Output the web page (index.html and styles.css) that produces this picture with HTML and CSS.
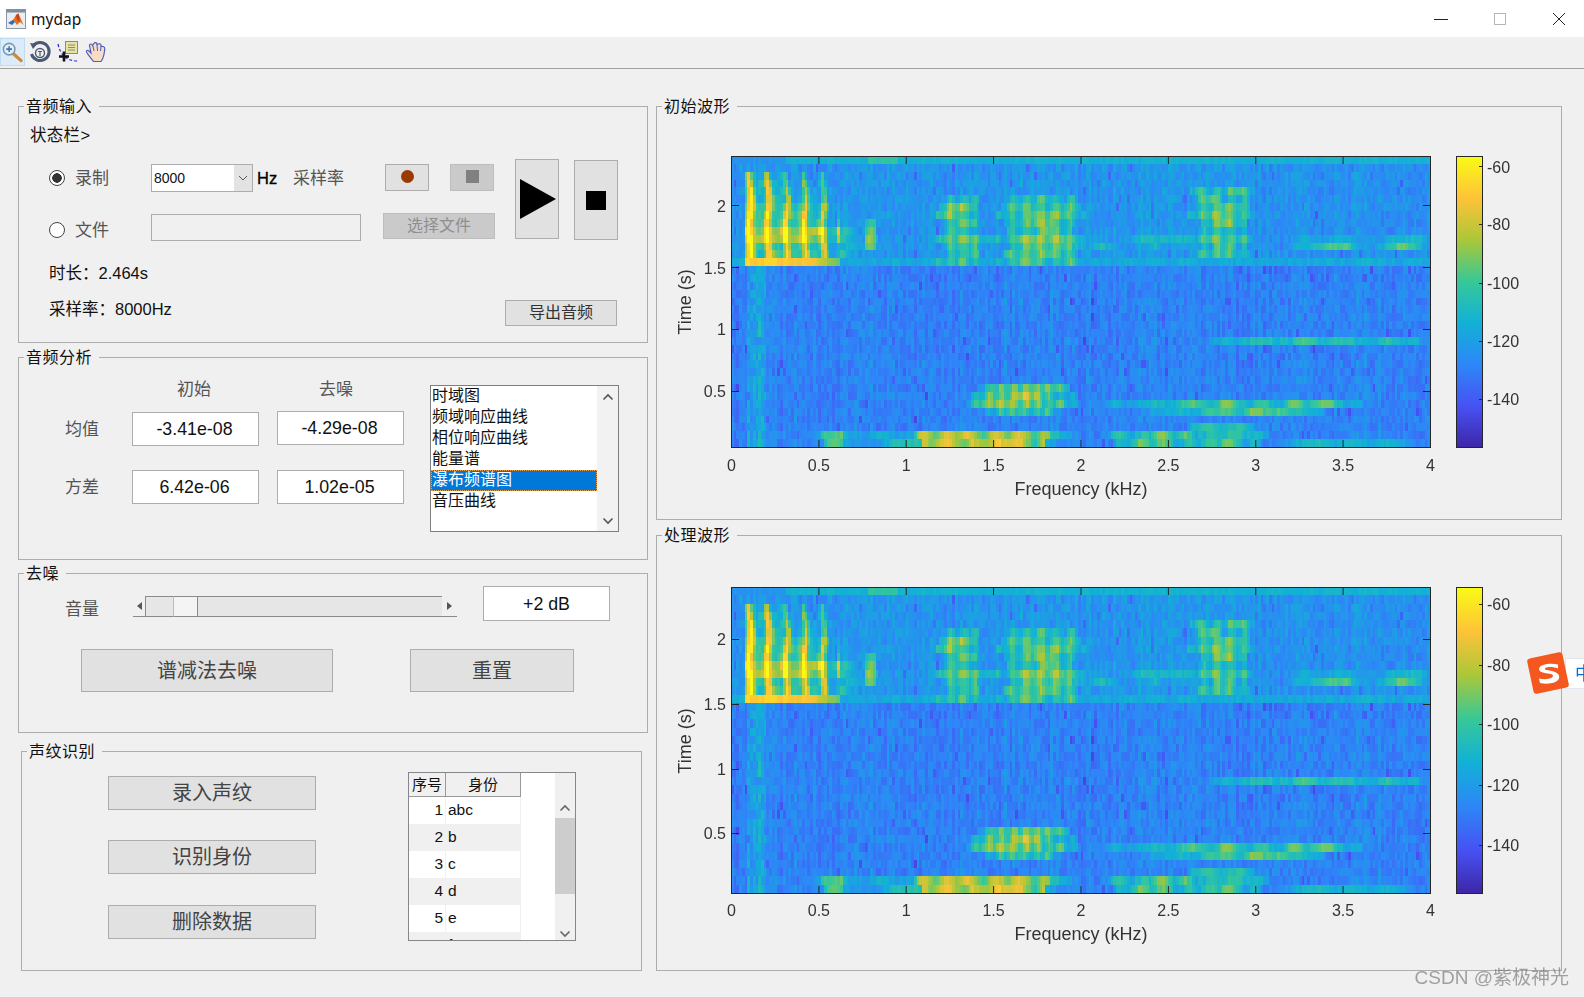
FILE: index.html
```html
<!DOCTYPE html>
<html lang="zh">
<head>
<meta charset="utf-8">
<title>mydap</title>
<link rel="stylesheet" href="styles.css">
</head>
<body>
<div class="window">
  <header class="titlebar">
    <svg class="app-icon" width="20" height="20" viewBox="0 0 20 20">
      <rect x="0.5" y="0.5" width="19" height="19" fill="#e8edf3" stroke="#8b97a6"/>
      <rect x="0.5" y="0.5" width="19" height="3" fill="#7d8ea3"/>
      <path d="M2 14 L7 11 L10 6 L12.5 4.5 L17.5 16 L14 13 L11 16 L8 12 Z" fill="#e8701a"/>
      <path d="M2 14 L7 11 L9 13 L6 16 Z" fill="#2a6fb5"/>
      <path d="M10 6 L12.5 4.5 L14 13 L11 11 Z" fill="#c9401a"/>
    </svg>
    <span class="app-name">mydap</span>
    <div class="win-controls">
      <svg class="win-btn" width="16" height="16" viewBox="0 0 16 16"><path d="M1 8.5H15" stroke="#222"/></svg>
      <svg class="win-btn" width="16" height="16" viewBox="0 0 16 16"><rect x="2.5" y="2.5" width="11" height="11" fill="none" stroke="#b5b5b5"/></svg>
      <svg class="win-btn" width="16" height="16" viewBox="0 0 16 16"><path d="M2 2L14 14M14 2L2 14" stroke="#222"/></svg>
    </div>
  </header>

  <nav class="toolbar">
    <div class="tool tool-active">
      <svg width="24" height="24" viewBox="0 0 24 24">
        <path d="M12 13L21 21" stroke="#c98a3c" stroke-width="3.4" stroke-linecap="round"/>
        <circle cx="8.5" cy="9" r="6" fill="#dfeefa" stroke="#7f97ad" stroke-width="1.6"/>
        <path d="M5.5 9H11.5M8.5 6V12" stroke="#3d78b4" stroke-width="1.6"/>
      </svg>
    </div>
    <div class="tool tool-rotate">
      <svg width="24" height="24" viewBox="0 0 24 24">
        <path d="M5 6A9 9 0 1 1 3.5 14" fill="none" stroke="#4a5a72" stroke-width="3"/>
        <path d="M2 3L9 4L5 9Z" fill="#4a5a72"/>
        <circle cx="12" cy="13" r="4.5" fill="none" stroke="#4a5a72" stroke-width="1.4"/>
        <path d="M10 11.5H14M12 11.5V16" stroke="#4a5a72" stroke-width="1.2"/>
      </svg>
    </div>
    <div class="tool tool-cursor">
      <svg width="24" height="24" viewBox="0 0 24 24">
        <path d="M2 4Q4 13 9 17T22 21" fill="none" stroke="#2b2fc4" stroke-width="1.2" stroke-dasharray="3 2"/>
        <rect x="9.5" y="1.5" width="12" height="12" fill="#e5e3a6" stroke="#8f8f62"/>
        <path d="M12 5H19M12 7.5H19M12 10H19" stroke="#8f8f62"/>
        <path d="M3 16.5H13M8 11.5V21.5" stroke="#111" stroke-width="2.6"/>
      </svg>
    </div>
    <div class="tool tool-hand">
      <svg width="24" height="24" viewBox="0 0 24 24">
        <path d="M3 13C1.5 11 3 9.5 5 11L7 13L5.5 5.5C5.5 3.5 8 3.5 8.5 5.5L9.8 3.5C11 2 13 2.5 13 4.5L15 3.8C16.8 3.5 17.5 5 17 6.5L19.3 6.5C21 7 21 9 20.5 11C20 16 19 19 17 21.5L9.5 21.5C7 18 5 16 3 13Z" fill="#f8dcc4" stroke="#4b5fc0" stroke-width="1.2"/>
        <path d="M9 6L10 11M13 4.5L13.5 11M17 6.5L16.5 11" stroke="#4b5fc0"/>
      </svg>
    </div>
  </nav>

  <main class="workspace">
    <div class="col-left">
      <fieldset class="panel panel-input">
        <legend>音频输入</legend>
        <div class="status">状态栏&gt;</div>
        <div class="input-main">
          <div class="input-left">
            <div class="input-row">
              <input class="radio" type="radio" name="src" checked>
              <span class="soft-label radio-label">录制</span>
              <div class="combo"><span class="combo-value">8000</span>
                <span class="combo-arrow"><svg width="10" height="6" viewBox="0 0 10 6"><path d="M1 1L5 5L9 1" fill="none" stroke="#555"/></svg></span>
              </div>
              <span class="hz">Hz</span>
              <span class="soft-label rate-label">采样率</span>
              <button class="btn rec-btn"><span class="rec-dot"></span></button>
              <button class="btn btn-off rec-stop"><span class="rec-square"></span></button>
            </div>
            <div class="input-row input-row-file">
              <input class="radio radio-low" type="radio" name="src">
              <span class="soft-label radio-label radio-label-low">文件</span>
              <div class="file-box"></div>
              <button class="btn btn-off choose-btn">选择文件</button>
            </div>
          </div>
          <button class="btn play-btn"><svg width="37" height="40" viewBox="0 0 37 40"><path d="M0 0L36 20L0 40Z" fill="#000"/></svg></button>
          <button class="btn big-stop"><span class="big-square"></span></button>
        </div>
        <div class="info-line">时长：2.464s</div>
        <div class="info-row">
          <span class="info-text">采样率：8000Hz</span>
          <button class="btn export-btn">导出音频</button>
        </div>
      </fieldset>

      <fieldset class="panel panel-analysis">
        <legend>音频分析</legend>
        <div class="analysis-main">
          <div class="stats">
            <div class="stat-head"><span class="soft-label head-a">初始</span><span class="soft-label head-b">去噪</span></div>
            <div class="stat-row">
              <span class="soft-label stat-label">均值</span>
              <div class="edit stat-a">-3.41e-08</div>
              <div class="edit stat-b stat-raised">-4.29e-08</div>
            </div>
            <div class="stat-row stat-row-2">
              <span class="soft-label stat-label">方差</span>
              <div class="edit stat-a">6.42e-06</div>
              <div class="edit stat-b">1.02e-05</div>
            </div>
          </div>
          <div class="listbox">
            <ul class="list-items">
              <li>时域图</li>
              <li>频域响应曲线</li>
              <li>相位响应曲线</li>
              <li>能量谱</li>
              <li class="selected">瀑布频谱图</li>
              <li>音压曲线</li>
            </ul>
            <div class="list-scroll">
              <svg width="12" height="8" viewBox="0 0 12 8"><path d="M1.5 6.5L6 2L10.5 6.5" fill="none" stroke="#555" stroke-width="1.6"/></svg>
              <svg width="12" height="8" viewBox="0 0 12 8"><path d="M1.5 1.5L6 6L10.5 1.5" fill="none" stroke="#555" stroke-width="1.6"/></svg>
            </div>
          </div>
        </div>
      </fieldset>

      <fieldset class="panel panel-denoise">
        <legend>去噪</legend>
        <div class="volume-row">
          <span class="soft-label volume-label">音量</span>
          <div class="slider">
            <span class="slider-end slider-end-left"><svg width="5" height="8" viewBox="0 0 5 8"><path d="M5 0V8L0 4Z" fill="#555"/></svg></span>
            <span class="slider-before"></span>
            <span class="slider-thumb"></span>
            <span class="slider-after"></span>
            <span class="slider-end slider-end-right"><svg width="5" height="8" viewBox="0 0 5 8"><path d="M0 0V8L5 4Z" fill="#555"/></svg></span>
          </div>
          <div class="edit volume-edit">+2 dB</div>
        </div>
        <div class="denoise-actions">
          <button class="btn large-btn spectral-btn">谱减法去噪</button>
          <button class="btn large-btn reset-btn">重置</button>
        </div>
      </fieldset>

      <fieldset class="panel panel-voice">
        <legend>声纹识别</legend>
        <div class="voice-main">
          <div class="voice-actions">
            <button class="btn voice-btn">录入声纹</button>
            <button class="btn voice-btn">识别身份</button>
            <button class="btn voice-btn voice-btn-last">删除数据</button>
          </div>
          <div class="id-table">
            <table class="id-grid">
              <thead><tr><th class="col-no">序号</th><th class="col-name">身份</th></tr></thead>
              <tbody>
                <tr><td class="cell-no">1</td><td>abc</td></tr>
                <tr class="alt"><td class="cell-no">2</td><td>b</td></tr>
                <tr><td class="cell-no">3</td><td>c</td></tr>
                <tr class="alt"><td class="cell-no">4</td><td>d</td></tr>
                <tr><td class="cell-no">5</td><td>e</td></tr>
                <tr class="alt"><td class="cell-no">6</td><td>f</td></tr>
              </tbody>
            </table>
            <div class="table-scroll">
              <span class="table-up"><svg width="12" height="8" viewBox="0 0 12 8"><path d="M1.5 6.5L6 2L10.5 6.5" fill="none" stroke="#666" stroke-width="1.6"/></svg></span>
              <span class="table-thumb"></span>
              <span class="table-down"><svg width="12" height="8" viewBox="0 0 12 8"><path d="M1.5 1.5L6 6L10.5 1.5" fill="none" stroke="#666" stroke-width="1.6"/></svg></span>
            </div>
          </div>
        </div>
      </fieldset>
    </div>

    <div class="col-right">
      <fieldset class="panel panel-wave panel-wave-a">
        <legend>初始波形</legend>
        <div class="plot plot-a">
          <canvas class="heat heat-a" width="699" height="291"></canvas>
          <svg class="axes" width="904" height="403" viewBox="0 0 904 403">
            <defs>
              <linearGradient id="parula-a" x1="0" y1="1" x2="0" y2="0">
                <stop offset="0" stop-color="#3e26a8"/><stop offset=".143" stop-color="#4752f4"/><stop offset=".286" stop-color="#2d87f7"/><stop offset=".429" stop-color="#12b1d6"/><stop offset=".571" stop-color="#37c897"/><stop offset=".714" stop-color="#abc738"/><stop offset=".857" stop-color="#fec338"/><stop offset="1" stop-color="#f9fb15"/>
              </linearGradient>
            </defs>
            <rect class="frame" x="74.5" y="40.5" width="699" height="291"/>
            <path class="tick" d="M74.5 331V324M161.9 331V324M249.2 331V324M336.6 331V324M424 331V324M511.4 331V324M598.8 331V324M686.1 331V324M773.5 331V324M161.9 41V48M249.2 41V48M336.6 41V48M424 41V48M511.4 41V48M598.8 41V48M686.1 41V48M75 89.5H82M75 151.5H82M75 213.5H82M75 275.5H82M773 89.5H766M773 151.5H766M773 213.5H766M773 275.5H766"/>
            <g class="tick-text tick-mid">
              <text x="74.5" y="355">0</text><text x="161.9" y="355">0.5</text><text x="249.2" y="355">1</text><text x="336.6" y="355">1.5</text><text x="424" y="355">2</text><text x="511.4" y="355">2.5</text><text x="598.8" y="355">3</text><text x="686.1" y="355">3.5</text><text x="773.5" y="355">4</text>
            </g>
            <g class="tick-text tick-end">
              <text x="69" y="96">2</text><text x="69" y="158">1.5</text><text x="69" y="219">1</text><text x="69" y="281">0.5</text>
            </g>
            <text class="axis-label tick-mid" x="424" y="379">Frequency (kHz)</text>
            <text class="axis-label tick-mid" transform="translate(34 186) rotate(-90)">Time (s)</text>
            <rect class="frame-bar" x="799.5" y="40.5" width="26" height="291" fill="url(#parula-a)"/>
            <path class="tick" d="M825 50.5H822M825 108.5H822M825 167.5H822M825 225.5H822M825 283.5H822"/>
            <g class="tick-text">
              <text x="830" y="57">-60</text><text x="830" y="114">-80</text><text x="830" y="173">-100</text><text x="830" y="231">-120</text><text x="830" y="289">-140</text>
            </g>
          </svg>
        </div>
      </fieldset>

      <fieldset class="panel panel-wave panel-wave-b">
        <legend>处理波形</legend>
        <div class="plot plot-b">
          <canvas class="heat heat-b" width="699" height="306"></canvas>
          <svg class="axes" width="904" height="425" viewBox="0 0 904 425">
            <defs>
              <linearGradient id="parula-b" x1="0" y1="1" x2="0" y2="0">
                <stop offset="0" stop-color="#3e26a8"/><stop offset=".143" stop-color="#4752f4"/><stop offset=".286" stop-color="#2d87f7"/><stop offset=".429" stop-color="#12b1d6"/><stop offset=".571" stop-color="#37c897"/><stop offset=".714" stop-color="#abc738"/><stop offset=".857" stop-color="#fec338"/><stop offset="1" stop-color="#f9fb15"/>
              </linearGradient>
            </defs>
            <rect class="frame" x="74.5" y="42.5" width="699" height="306"/>
            <path class="tick" d="M74.5 348V341M161.9 348V341M249.2 348V341M336.6 348V341M424 348V341M511.4 348V341M598.8 348V341M686.1 348V341M773.5 348V341M161.9 43V50M249.2 43V50M336.6 43V50M424 43V50M511.4 43V50M598.8 43V50M686.1 43V50M75 94.5H82M75 159.5H82M75 224.5H82M75 288.5H82M773 94.5H766M773 159.5H766M773 224.5H766M773 288.5H766"/>
            <g class="tick-text tick-mid">
              <text x="74.5" y="371">0</text><text x="161.9" y="371">0.5</text><text x="249.2" y="371">1</text><text x="336.6" y="371">1.5</text><text x="424" y="371">2</text><text x="511.4" y="371">2.5</text><text x="598.8" y="371">3</text><text x="686.1" y="371">3.5</text><text x="773.5" y="371">4</text>
            </g>
            <g class="tick-text tick-end">
              <text x="69" y="100">2</text><text x="69" y="165">1.5</text><text x="69" y="230">1</text><text x="69" y="294">0.5</text>
            </g>
            <text class="axis-label tick-mid" x="424" y="395">Frequency (kHz)</text>
            <text class="axis-label tick-mid" transform="translate(34 196) rotate(-90)">Time (s)</text>
            <rect class="frame-bar" x="799.5" y="42.5" width="26" height="306" fill="url(#parula-b)"/>
            <path class="tick" d="M825 59.5H822M825 120.5H822M825 179.5H822M825 240.5H822M825 300.5H822"/>
            <g class="tick-text">
              <text x="830" y="65">-60</text><text x="830" y="126">-80</text><text x="830" y="185">-100</text><text x="830" y="246">-120</text><text x="830" y="306">-140</text>
            </g>
          </svg>
        </div>
      </fieldset>
    </div>
  </main>

  <div class="ime">
    <svg class="ime-logo" width="42" height="42" viewBox="0 0 42 42">
      <rect x="3" y="3" width="36" height="36" rx="3" fill="#f4581f" transform="rotate(-12 21 21)"/>
      <path d="M31 12.5C25 11 15 11.5 12.5 15.5C10.5 19 15 21 21 21.5C25 22 27.5 23 25 25.5C22 27.5 16 27.5 12 26.5L13 31C20 32.5 30 31.5 32 26.5C33.5 22 28.5 19.5 22.5 18.5C19 18 16.5 17.5 18.5 16C21 14.5 27 15 31 16.5Z" fill="#fff"/>
    </svg>
    <span class="ime-tab">中</span>
  </div>
  <div class="watermark">CSDN @紫极神光</div>
</div>
<script src="app.js"></script>
</body>
</html>
```

FILE: styles.css
```css
* { box-sizing: border-box; }
html, body { margin: 0; padding: 0; height: 100%; overflow: hidden; }
body {
  background: #f0f0f0;
  color: #111;
  font: 16px/18px "Liberation Sans", "Noto Sans CJK SC", sans-serif;
}
.window { position: relative; width: 1584px; height: 997px; overflow: hidden; }

/* title bar */
.titlebar { display: flex; align-items: center; height: 37px; background: #fff; padding-left: 6px; }
.app-icon { flex: none; }
.app-name { margin-left: 5px; font: 15.5px/20px "Noto Sans", sans-serif; color: #111; }
.win-controls { display: flex; margin-left: auto; margin-right: 17px; }
.win-btn { margin-left: 43px; }

/* toolbar */
.toolbar { display: flex; height: 32px; border-bottom: 1px solid #a0a0a0; background: #f0f0f0; }
.tool { display: flex; align-items: center; justify-content: center; width: 25px; height: 28px; margin-top: 1px; }
.tool-active { background: #dcebf7; border: 1px solid #bcdcf4; }
.tool-rotate { margin-left: 2px; }
.tool-cursor { margin-left: 3px; }
.tool-hand { margin-left: 3px; }

/* columns */
.workspace { display: flex; padding-top: 27px; }
.col-left { width: 656px; padding-left: 18px; flex: none; }
.col-right { width: 906px; flex: none; }

/* panels */
.panel { display: block; min-width: 0; margin: 0; padding: 0; border: 1px solid #adadad; }
.panel legend { margin-left: 5px; padding: 0 7px 0 2px; height: 20px; font-size: 16px; line-height: 22px; letter-spacing: .5px; color: #111; }
.panel-input { width: 630px; height: 247px; }
.panel-analysis { width: 630px; height: 213px; margin-top: 4px; }
.panel-denoise { width: 630px; height: 170px; margin-top: 3px; }
.panel-voice { width: 621px; height: 230px; margin: 8px 0 0 3px; }
.panel-wave { width: 906px; }
.panel-wave-a { height: 424px; }
.panel-wave-b { height: 446px; margin-top: 5px; }

/* shared controls */
.soft-label { color: #555; font-size: 17px; line-height: 18px; white-space: nowrap; }
.btn {
  display: block; flex: none; padding: 0; margin: 0;
  background: #e1e1e1; border: 1px solid #adadad; border-radius: 0;
  color: #333; font: 16px/18px "Liberation Sans", "Noto Sans CJK SC", sans-serif;
}
.btn-off { background: #cacaca; border-color: #bdbdbd; color: #8f8f8f; }
.edit {
  display: flex; align-items: center; justify-content: center; flex: none;
  width: 127px; height: 34px; background: #fff; border: 1px solid #adadad;
  font-size: 17.8px; color: #111; padding-right: 2px;
}

/* audio input panel */
.status { margin: 10px 0 0 11px; height: 18px; color: #111; font-size: 16.5px; letter-spacing: .3px; }
.input-main { display: flex; align-items: flex-start; margin-top: 15px; }
.input-left { width: 496px; padding: 5px 0 0 30px; flex: none; }
.input-row { display: flex; align-items: flex-start; height: 28px; }
.input-row-file { margin-top: 21px; }
.radio {
  appearance: none; flex: none; width: 16px; height: 16px; margin: 6px 0 0 0;
  border: 1px solid #444; border-radius: 50%; background: #fff;
}
.radio-low { margin-top: 9px; }
.radio:checked { background: radial-gradient(circle, #333 0 4.5px, #fff 5px); }
.radio-label { margin: 6px 0 0 10px; width: 76px; }
.radio-label-low { margin-top: 9px; }
.combo { display: flex; flex: none; width: 102px; height: 28px; background: #fff; border: 1px solid #adadad; }
.combo-value { flex: 1; padding-left: 2px; font-size: 14px; line-height: 26px; }
.combo-arrow { display: flex; align-items: center; justify-content: center; width: 18px; background: #e3e3e3; }
.hz { margin: 5px 0 0 4px; width: 36px; font-size: 16.5px; color: #000; -webkit-text-stroke: .3px #000; }
.rate-label { margin-top: 6px; width: 92px; }
.rec-btn { width: 44px; height: 27px; }
.rec-dot { display: block; width: 13px; height: 13px; margin: -3px auto 0; border-radius: 50%; background: #9b3a00; }
.rec-stop { width: 44px; height: 27px; margin-left: 21px; }
.rec-square { display: block; width: 13px; height: 13px; margin: -3px auto 0; background: #808080; }
.file-box { flex: none; width: 210px; height: 27px; margin-top: 1px; background: #f0f0f0; border: 1px solid #adadad; }
.choose-btn { width: 112px; height: 26px; margin-left: 22px; }
.play-btn { display: flex; align-items: center; width: 44px; height: 80px; padding-left: 4px; }
.big-stop { display: flex; align-items: center; justify-content: center; width: 44px; height: 80px; margin: 1px 0 0 15px; }
.big-square { display: block; width: 20px; height: 19px; background: #000; }
.info-line { margin: 23px 0 0 30px; height: 18px; font-size: 16.5px; }
.info-row { display: flex; align-items: flex-start; margin-top: 18px; padding-left: 30px; font-size: 16.5px; }
.info-text { margin-top: 0; }
.export-btn { width: 112px; height: 26px; margin: 0 30px 0 auto; }

/* analysis panel */
.analysis-main { display: flex; align-items: flex-start; }
.stats { width: 385px; flex: none; }
.stat-head { display: flex; margin-top: 14px; height: 18px; }
.head-a { margin-left: 158px; }
.head-b { margin-left: 108px; }
.stat-row { display: flex; align-items: center; height: 34px; margin-top: 13px; padding-left: 46px; }
.stat-row-2 { margin-top: 24px; }
.stat-label { width: 67px; padding-top: 2px; }
.stat-b { margin-left: 18px; }
.stat-raised { position: relative; top: -1px; }
.listbox { display: flex; flex: none; width: 189px; height: 147px; margin: 18px 0 0 26px; background: #fff; border: 1px solid #7f7f7f; }
.list-items { flex: 1; margin: 0; padding: 0; list-style: none; }
.list-items li { height: 21px; padding-left: 1px; font-size: 16px; line-height: 20px; color: #111; }
.list-items .selected { background: #0078d7; color: #fff; outline: 1px dotted #e8a050; outline-offset: -1px; }
.list-scroll { display: flex; flex-direction: column; align-items: center; justify-content: space-between; width: 21px; padding: 7px 0 6px; background: #f2f2f2; }

/* denoise panel */
.volume-row { display: flex; align-items: flex-start; margin-top: 3px; height: 35px; }
.volume-label { margin: 15px 0 0 46px; width: 68px; }
.slider { display: flex; flex: none; width: 324px; height: 21px; margin-top: 10px; }
.slider-end { display: flex; align-items: center; justify-content: center; flex: none; background: #f0f0f0; border-bottom: 1px solid #8a8a8a; }
.slider-end-left { width: 12px; }
.slider-end-right { width: 15px; }
.slider-before { width: 29px; flex: none; background: #e6e6e6; border: 1px solid #8a8a8a; border-right: 1px solid #bbb; }
.slider-thumb { width: 24px; flex: none; background: #f4f4f4; border-bottom: 1px solid #8a8a8a; border-top: 1px solid #8a8a8a; border-right: 1px solid #8a8a8a; }
.slider-after { flex: 1; background: #e6e6e6; border-top: 1px solid #8a8a8a; border-bottom: 1px solid #8a8a8a; }
.volume-edit { height: 35px; margin-left: 26px; padding-right: 0; }
.denoise-actions { display: flex; margin-top: 28px; }
.large-btn { height: 43px; font-size: 20px; color: #444; }
.spectral-btn { width: 252px; margin-left: 62px; }
.reset-btn { width: 164px; margin-left: 77px; }

/* voiceprint panel */
.voice-main { display: flex; align-items: flex-start; }
.voice-actions { flex: none; margin: 15px 0 0 86px; width: 207px; }
.voice-btn { width: 208px; height: 34px; margin-bottom: 30px; font-size: 20px; color: #444; }
.voice-btn-last { margin-bottom: 0; margin-top: 31px; }
.id-table { display: flex; flex: none; width: 168px; height: 169px; margin: 11px 0 0 93px; background: #fff; border: 1px solid #84888c; overflow: hidden; }
.id-grid { width: 112px; flex: none; align-self: flex-start; margin-right: 34px; table-layout: fixed; border-collapse: separate; border-spacing: 0; font-size: 15.5px; }
.id-grid th { height: 24px; padding: 0; background: #f0f0f0; border-right: 1px solid #999; border-bottom: 1px solid #999; font-weight: 400; font-size: 15px; line-height: 18px; }
.id-grid .col-no { width: 37px; }
.id-grid .col-name { width: 75px; }
.id-grid td { height: 27px; padding: 0 0 2px 2px; border-right: 1px solid #f0f0f0; line-height: 18px; overflow: hidden; }
.id-grid .cell-no { padding: 0 2px 2px 0; text-align: right; }
.id-grid .alt td { background: #f0f0f0; }
.table-scroll { display: flex; flex-direction: column; flex: 1; align-items: center; background: #f0f0f0; }
.table-up { display: flex; align-items: flex-end; justify-content: center; height: 39px; flex: none; }
.table-thumb { display: block; width: 100%; height: 76px; margin-top: 6px; background: #cdcdcd; }
.table-down { margin-top: auto; height: 16px; }

/* plots */
.plot { position: relative; }
.plot-a { height: 403px; padding: 40px 0 0 74px; }
.plot-b { height: 425px; padding: 42px 0 0 74px; }
.heat { display: block; }
.axes { position: absolute; left: 0; top: 0; overflow: visible; }
.frame { fill: none; stroke: #262626; }
.frame-bar { stroke: #262626; }
.tick { fill: none; stroke: #262626; }
.tick-text { font: 16px "Liberation Sans", sans-serif; fill: #333; }
.tick-mid { text-anchor: middle; }
.tick-end { text-anchor: end; }
.axis-label { font: 18px "Liberation Sans", sans-serif; fill: #333; }

/* overlays */
.ime { position: absolute; left: 1527px; top: 652px; display: flex; align-items: center; }
.ime-logo { position: relative; z-index: 1; flex: none; }
.ime-tab { display: block; width: 24px; height: 31px; margin-left: -4px; padding-left: 9px; background: #fff; color: #0a6fd0; font-size: 18px; line-height: 31px; border: 1px solid #e2e6ee; white-space: nowrap; overflow: hidden; }
.watermark { position: absolute; right: 15px; top: 967px; color: rgba(110,110,110,.62); font: 19px/22px "Liberation Sans", "Noto Sans CJK SC", sans-serif; }
```

FILE: app.js
```js
(function () {
  var seed = 20240611;
  function rnd() {
    seed = (seed + 0x6D2B79F5) | 0;
    var t = Math.imul(seed ^ (seed >>> 15), 1 | seed);
    t = (t + Math.imul(t ^ (t >>> 7), 61 | t)) ^ t;
    return ((t ^ (t >>> 14)) >>> 0) / 4294967296;
  }
  var ROWS = 37, COLS = 256, TOP = 2.39, DT = (2.39 - 0.044) / 37;
  var STOPS = [[62,38,168],[71,82,244],[45,135,247],[18,177,214],[55,200,151],[171,199,56],[254,195,56],[249,251,21]];
  function color(v) {
    var t = Math.max(0, Math.min(0.9999, (v + 157) / 100.5)) * 7;
    var i = Math.floor(t), k = t - i, a = STOPS[i], b = STOPS[i + 1];
    return 'rgb(' + [0, 1, 2].map(function (c) { return Math.round(a[c] + (b[c] - a[c]) * k); }).join(',') + ')';
  }
  // [f0, f1, t0, t1, level, stripe period]
  var BLOBS = [
    [1.18, 1.44, 1.52, 2.08, -99, 0.075], [1.52, 2.02, 1.52, 2.05, -98, 0.085], [2.62, 3.0, 1.55, 2.14, -100, 0.08],
    [0.85, 3.1, 1.6, 1.78, -116, 0],
    [3.05, 4.0, 1.6, 1.74, -111, 0], [3.25, 3.65, 1.62, 1.72, -103, 0], [3.72, 4.0, 1.62, 1.74, -102, 0],
    [0.58, 0.74, 1.52, 1.88, -111, 0], [0.76, 0.84, 1.66, 1.86, -94, 0],
    [2.8, 4.0, 0.84, 0.93, -113, 0], [2.85, 3.45, 0.84, 0.93, -105, 0],
    [1.4, 1.95, 0.28, 0.58, -104, 0.07], [1.48, 1.78, 0.34, 0.54, -93, 0.07],
    [2.25, 3.52, 0.28, 0.42, -106, 0], [2.65, 3.45, 0.28, 0.41, -100, 0.19],
    [0.5, 1.9, 0.04, 0.16, -111, 0], [1.1, 1.78, 0.05, 0.14, -80, 0.14], [1.72, 1.95, 0.09, 0.18, -103, 0],
    [2.22, 3.02, 0.04, 0.16, -103, 0.13], [2.6, 3.02, 0.11, 0.22, -103, 0], [3.0, 4.0, 0.04, 0.11, -113, 0],
    [0.53, 0.64, 0.04, 0.14, -93, 0]
  ];
  var colNoise = [];
  for (var c = 0; c < COLS; c++) colNoise.push(rnd() - 0.5);

  // patchy value noise along frequency, one curve per row
  var patches = [];
  for (var pr = 0; pr < ROWS; pr++) {
    var line = [];
    for (var pc = 0; pc < COLS / 5 + 3; pc++) line.push(rnd());
    patches.push(line);
  }
  function patch(r, i) {
    var x = i / 5, k = Math.floor(x), u = x - k;
    return patches[r][k] * (1 - u) + patches[r][k + 1] * u;
  }
  function value(r, i) {
    var f = (i + 0.5) / COLS * 4, t = TOP - (r + 0.5) * DT;
    var n = rnd() - 0.5;
    var p = patch(r, i) - 0.5;
    var v = -129 + n * 11 + colNoise[i] * 6;
    if (rnd() < 0.04) v -= 9;
    if (r < 14) v += f < 3 ? 6 : 4;
    if (r === 13) v = -116 + n * 8 + p * 6;
    if (r === 0) v = (f < 0.32 ? -124 : f > 0.78 && f < 0.95 ? -103 : -113) + n * 5;
    if (r > 13 && f > 0.1 && f < 0.2) v += 8 + n * 5;
    if (r > 20 && f > 0.15 && f < 0.18) v += 5;
    BLOBS.forEach(function (b) {
      var cf = (b[0] + b[1]) / 2, hf = (b[1] - b[0]) / 2;
      var ct = (b[2] + b[3]) / 2, ht = (b[3] - b[2]) / 2;
      var df = Math.abs(f - cf) / hf + (patch(r, 0) - 0.5) * 0.5;
      var dt = Math.abs(t - ct) / ht;
      if (dt > 1 || df > 1) return;
      var edge = Math.pow(Math.max(df, dt * 0.8), 3) * 16;
      var s = b[5] ? Math.cos(2 * Math.PI * (f - b[0]) / b[5] + p) : 0;
      v = Math.max(v, b[4] + s * 8 + n * 8 + p * 22 - edge);
    });
    if (f > 0.08 && f < 0.62 && t > 1.5 && t < 2.28) {
      var shift = Math.sin(r * 0.9) * 0.008;
      var s1 = Math.pow(0.5 + 0.5 * Math.cos(2 * Math.PI * (f - 0.108 + shift) / 0.105), 3);
      var lvl = -102 + 40 * s1 - (f - 0.1) * 10 + n * 10 + p * 12;
      if (t > 1.95) lvl -= (t - 1.95) * 60 + (f > 0.3 ? (t - 1.95) * 50 : 0);
      if (t > 1.68 && t < 1.84) lvl += 14;
      if (f < 0.135) lvl += 6;
      if (f > 0.48) lvl -= (f - 0.48) * 170;
      if (r === 13) lvl = -68 - Math.max(0, f - 0.42) * 130 + n * 6 + p * 8;
      v = Math.max(v, lvl);
    }
    return v;
  }
  var data = [];
  for (var r = 0; r < ROWS; r++) {
    var row = [];
    for (var i = 0; i < COLS; i++) row.push(value(r, i));
    data.push(row);
  }
  document.querySelectorAll('.heat').forEach(function (cv) {
    var g = cv.getContext('2d'), W = cv.width, H = cv.height;
    for (var r = 0; r < ROWS; r++) {
      var y0 = Math.round(r * H / ROWS), y1 = Math.round((r + 1) * H / ROWS);
      for (var i = 0; i < COLS; i++) {
        var x0 = Math.round(i * W / COLS), x1 = Math.round((i + 1) * W / COLS);
        g.fillStyle = color(data[r][i]);
        g.fillRect(x0, y0, x1 - x0, y1 - y0);
      }
    }
  });
})();
```
